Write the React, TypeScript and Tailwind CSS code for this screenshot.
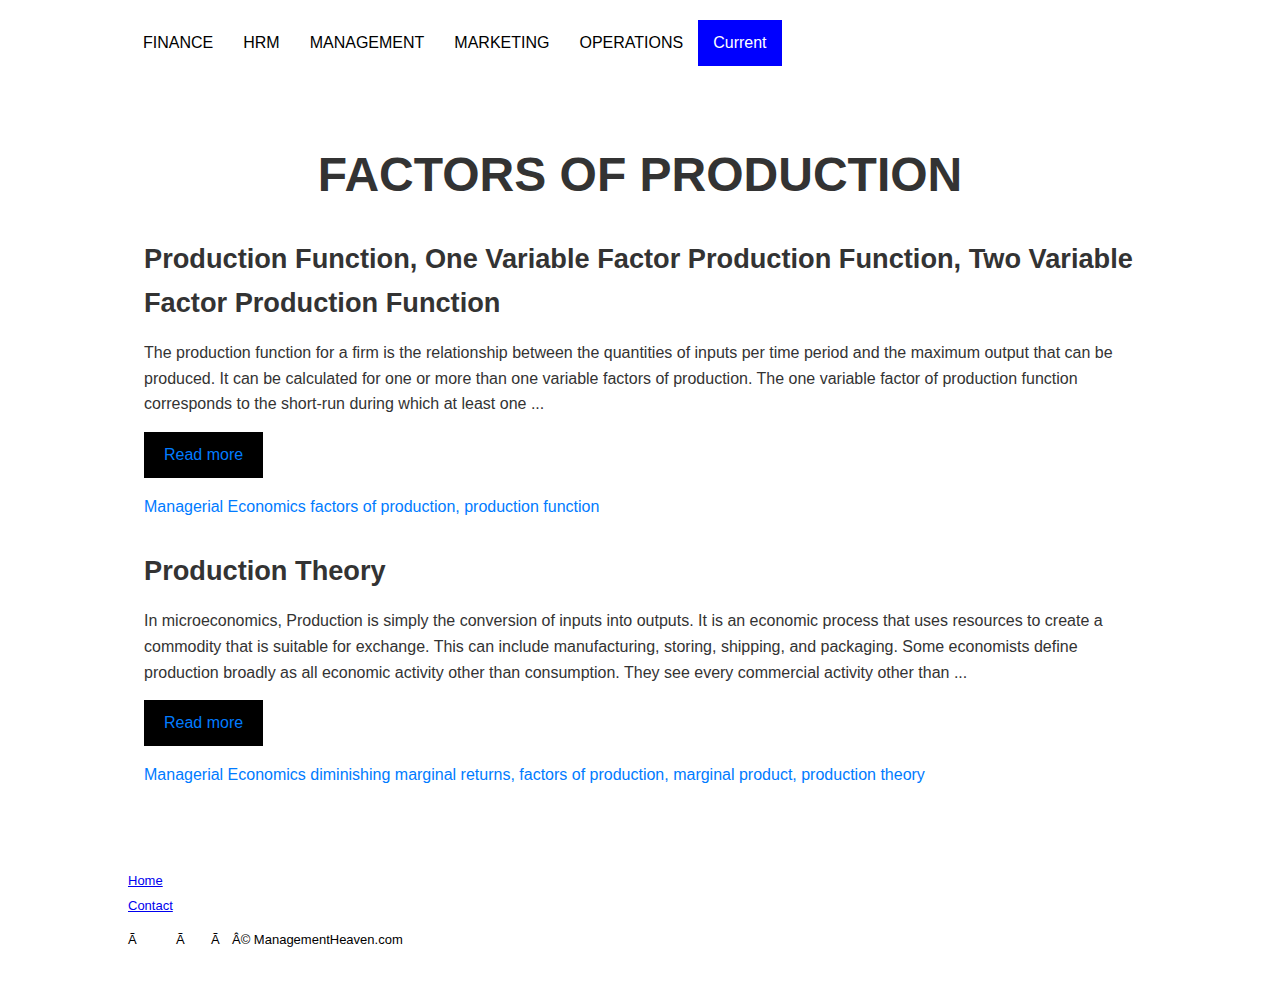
const navItems = ['FINANCE', 'HRM', 'MANAGEMENT', 'MARKETING', 'OPERATIONS']

const posts = [
  {
    title: 'Production Function, One Variable Factor Production Function, Two Variable Factor Production Function',
    excerpt:
      'The production function for a firm is the relationship between the quantities of inputs per time period and the maximum output that can be produced. It can be calculated for one or more than one variable factors of production. The one variable factor of production function corresponds to the short-run during which at least one ...',
    tags: ['factors of production', 'production function'],
  },
  {
    title: 'Production Theory',
    excerpt:
      'In microeconomics, Production is simply the conversion of inputs into outputs. It is an economic process that uses resources to create a commodity that is suitable for exchange. This can include manufacturing, storing, shipping, and packaging. Some economists define production broadly as all economic activity other than consumption. They see every commercial activity other than ...',
    tags: ['diminishing marginal returns', 'factors of production', 'marginal product', 'production theory'],
  },
]

export default function App() {
  return (
    <div className="min-h-screen bg-white font-['Liberation_Sans',Arial,sans-serif] text-[#333]">
      <div className="mx-auto w-[1024px]">
        <nav className="flex pt-5">
          {navItems.map((item) => (
            <a key={item} href="#" className="px-[15px] py-[15px] text-base leading-4 text-black">
              {item}
            </a>
          ))}
          <a href="#" className="bg-[#0000ff] px-[15px] py-[15px] text-base leading-4 text-white">
            Current
          </a>
        </nav>

        <main className="px-4 pt-[81px]">
          <h1 className="text-center text-[48px] font-bold leading-[55px]">FACTORS OF PRODUCTION</h1>

          <div className="mt-[35px]">
            {posts.map((post, i) => (
              <article key={i} className={i > 0 ? 'mt-[29.5px]' : ''}>
                <h2 className="text-[27.2px] font-bold leading-[1.6]">{post.title}</h2>
                <p className="mt-4 text-base leading-[1.6]">{post.excerpt}</p>
                <a href="#" className="mt-[15px] inline-block bg-black px-5 py-[15px] text-base leading-4 text-[#007bff]">
                  Read more
                </a>
                <div className="mt-4 text-base leading-[1.6] text-[#007bff]">
                  <a href="#">Managerial Economics</a>{' '}
                  {post.tags.map((t, j) => (
                    <span key={t}>
                      <a href="#">{t}</a>
                      {j < post.tags.length - 1 ? ', ' : ''}
                    </span>
                  ))}
                </div>
              </article>
            ))}
          </div>
        </main>

        <footer className="pt-[80px] pb-9 text-[13px]">
          <div className="leading-[25px]">
            <a href="#" className="text-[#0000ee] underline">Home</a>
          </div>
          <div className="leading-[25px]">
            <a href="#" className="text-[#0000ee] underline">Contact</a>
          </div>
          <p className="mt-[9px] leading-[25px] text-black">
            <span className="inline-block w-[48px]">Ã</span>
            <span className="inline-block w-[35px]">Ã</span>
            <span className="inline-block w-[21px]">Ã</span>
            Â© ManagementHeaven.com
          </p>
        </footer>
      </div>
    </div>
  )
}
